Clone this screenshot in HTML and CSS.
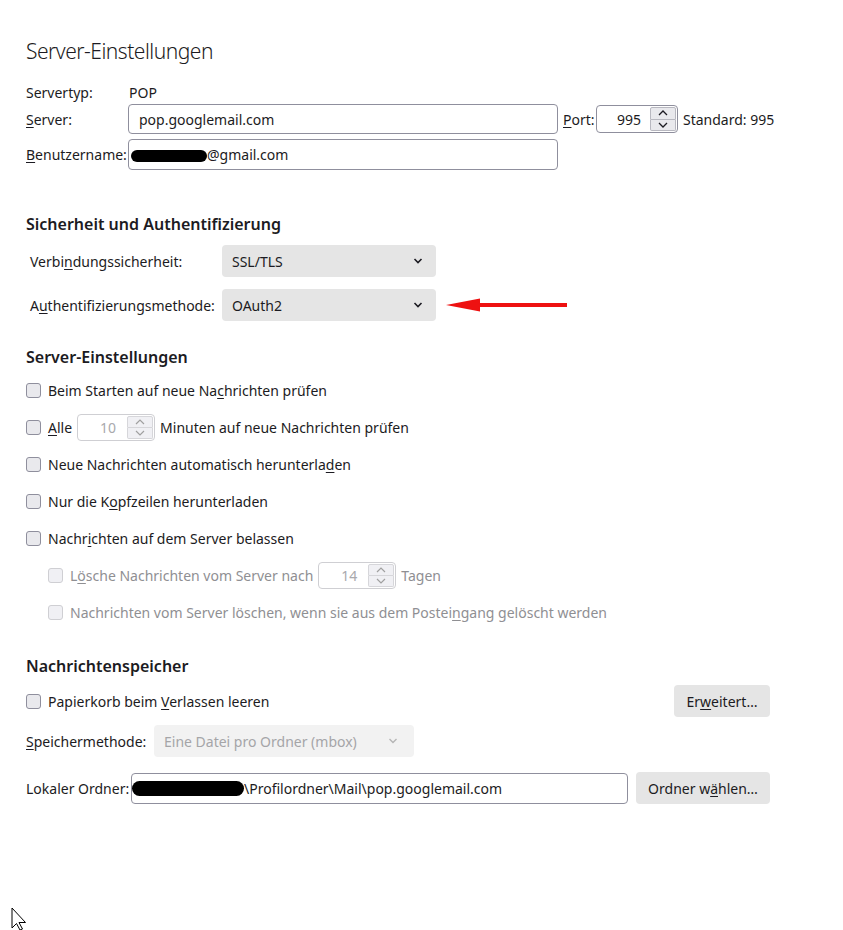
FILE: index.html
```html
<!DOCTYPE html>
<html lang="de">
<head>
<meta charset="utf-8">
<title>Server-Einstellungen</title>
<link rel="stylesheet" href="styles.css">
</head>
<body>
<div class="page">
  <h1 class="title">Server-Einstellungen</h1>

  <div class="row r-type">
    <span class="lbl-a">Servertyp:</span>
    <span class="value">POP</span>
  </div>
  <div class="row r-server">
    <span class="lbl-a"><u>S</u>erver:</span>
    <div class="textbox tb-server">pop.googlemail.com</div>
    <span class="port-lbl"><u>P</u>ort:</span>
    <div class="spin spin-port">
      <span class="spin-val">995</span>
      <span class="spin-btns"><span class="sb up"><svg viewBox="0 0 10 6" width="10" height="6"><path d="M1 5 L5 1 L9 5" fill="none" stroke="#1c1b22" stroke-width="1.3"/></svg></span><span class="sb dn"><svg viewBox="0 0 10 6" width="10" height="6"><path d="M1 1 L5 5 L9 1" fill="none" stroke="#1c1b22" stroke-width="1.3"/></svg></span></span>
    </div>
    <span class="std">Standard: 995</span>
  </div>
  <div class="row r-user">
    <span class="lbl-a"><u>B</u>enutzername:</span>
    <div class="textbox tb-user"><span class="redact r-user-blob"></span>@gmail.com</div>
  </div>

  <h2 class="sect s-sec">Sicherheit und Authentifizierung</h2>
  <div class="row sel-row r-conn">
    <span class="lbl-b">Verbi<u>n</u>dungssicherheit:</span>
    <div class="select sel-sec">SSL/TLS<svg class="chev" viewBox="0 0 10 6" width="10" height="6"><path d="M1.5 1 L5 4.5 L8.5 1" fill="none" stroke="#1c1b22" stroke-width="1.6"/></svg></div>
  </div>
  <div class="row sel-row r-auth">
    <span class="lbl-b">A<u>u</u>thentifizierungsmethode:</span>
    <div class="select sel-sec">OAuth2<svg class="chev" viewBox="0 0 10 6" width="10" height="6"><path d="M1.5 1 L5 4.5 L8.5 1" fill="none" stroke="#1c1b22" stroke-width="1.6"/></svg></div>
    <svg class="red-arrow" viewBox="0 0 122 16" width="122" height="16"><path d="M0 8 L34 1.5 L34 6 L121 6 L121 10 L34 10 L34 14.5 Z" fill="#ee1111"/></svg>
  </div>

  <h2 class="sect s-srv">Server-Einstellungen</h2>
  <div class="cb-row first"><span class="cb"></span><span>Beim Starten auf neue Na<u>c</u>hrichten prüfen</span></div>
  <div class="cb-row"><span class="cb"></span><span><u>A</u>lle</span>
    <div class="spin spin-small dis">
      <span class="spin-val">10</span>
      <span class="spin-btns"><span class="sb up"><svg viewBox="0 0 10 6" width="10" height="6"><path d="M1 5 L5 1 L9 5" fill="none" stroke="#a0a0a0" stroke-width="1.2"/></svg></span><span class="sb dn"><svg viewBox="0 0 10 6" width="10" height="6"><path d="M1 1 L5 5 L9 1" fill="none" stroke="#a0a0a0" stroke-width="1.2"/></svg></span></span>
    </div>
    <span>Minuten auf neue Nachrichten prüfen</span></div>
  <div class="cb-row"><span class="cb"></span><span>Neue Nachrichten automatisch herunterla<u>d</u>en</span></div>
  <div class="cb-row"><span class="cb"></span><span>Nur die K<u>o</u>pfzeilen herunterladen</span></div>
  <div class="cb-row"><span class="cb"></span><span>Nachr<u>i</u>chten auf dem Server belassen</span></div>
  <div class="cb-row sub dis"><span class="cb"></span><span>L<u>ö</u>sche Nachrichten vom Server nach</span>
    <div class="spin spin-small dis">
      <span class="spin-val">14</span>
      <span class="spin-btns"><span class="sb up"><svg viewBox="0 0 10 6" width="10" height="6"><path d="M1 5 L5 1 L9 5" fill="none" stroke="#a0a0a0" stroke-width="1.2"/></svg></span><span class="sb dn"><svg viewBox="0 0 10 6" width="10" height="6"><path d="M1 1 L5 5 L9 1" fill="none" stroke="#a0a0a0" stroke-width="1.2"/></svg></span></span>
    </div>
    <span>Tagen</span></div>
  <div class="cb-row sub dis"><span class="cb"></span><span>Nachrichten vom Server löschen, wenn sie aus dem Postei<u>n</u>gang gelöscht werden</span></div>

  <h2 class="sect s-store">Nachrichtenspeicher</h2>
  <div class="store-row r-trash">
    <div class="cb-inline"><span class="cb"></span><span>Papierkorb beim <u>V</u>erlassen leeren</span></div>
    <div class="btn btn-adv">Er<u>w</u>eitert…</div>
  </div>
  <div class="store-row r-method">
    <span class="lbl-c"><u>S</u>peichermethode:</span>
    <div class="select sel-dis">Eine Datei pro Ordner (mbox)<svg class="chev" viewBox="0 0 10 6" width="10" height="6"><path d="M1.5 1 L5 4.5 L8.5 1" fill="none" stroke="#b5b5b5" stroke-width="1.4"/></svg></div>
  </div>
  <div class="store-row r-local">
    <span class="lbl-d">Lokaler Ordner:</span>
    <div class="textbox tb-local"><span class="redact r-local-blob"></span>\Profilordner\Mail\pop.googlemail.com</div>
    <div class="btn btn-folder">Ordner w<u>ä</u>hlen…</div>
  </div>
</div>
<svg class="cursor" viewBox="0 0 18 24" width="18" height="24"><path d="M1 1 L1 21 L5.5 16.5 L9 23 L11.5 22 L8 15.5 L14.5 15.5 Z" fill="#ffffff" stroke="#000000" stroke-width="1"/></svg>
</body>
</html>
```

FILE: styles.css
```css
* { box-sizing: border-box; }
html, body { margin: 0; padding: 0; background: #ffffff; }
body {
  font-family: "Noto Sans", "Open Sans", sans-serif;
  font-size: 14px;
  color: #1c1b22;
  width: 843px;
  height: 930px;
  position: relative;
  overflow: hidden;
}
u { text-decoration: underline; text-underline-offset: 2px; }
.page { padding: 37px 0 0 26px; width: 770px; }

.title {
  font-size: 21px;
  font-weight: 300;
  line-height: 28px;
  letter-spacing: -0.5px;
  margin: 0;
  height: 28px;
}

.row { display: flex; align-items: center; }
.row > * { flex: none; }
.r-type { height: 20px; margin-top: 17px; }
.r-server { height: 30px; margin-top: 2px; }
.r-user { height: 31px; margin-top: 5px; }
.lbl-a { width: 102px; }
.value { padding-left: 1px; }

.textbox {
  border: 1px solid #8f8f9d;
  border-radius: 4px;
  height: 100%;
  display: flex;
  align-items: center;
  padding-left: 10px;
  background: #fff;
  flex: none;
  white-space: nowrap;
}
.tb-server { width: 430px; }
.tb-user { width: 430px; padding-left: 2px; }
.redact { display: inline-block; background: #000; border-radius: 8px; }
.r-user-blob { width: 76px; height: 12px; margin-top: 2px; }
.port-lbl { margin-left: 5px; width: 33px; }
.std { margin-left: 5px; white-space: nowrap; }

.spin {
  border: 1px solid #8f8f9d;
  border-radius: 4px;
  display: flex;
  align-items: stretch;
  background: #fff;
  flex: none;
}
.spin-port { width: 82px; height: 28px; }
.spin-val { flex: 1; text-align: right; padding-right: 9px; display: flex; align-items: center; justify-content: flex-end; }
.spin-btns { width: 27px; display: flex; flex-direction: column; padding: 1px 1px 1px 0; }
.sb { flex: 1; display: flex; align-items: center; justify-content: center; background: #e9e9ed; border: 1px solid #b8b8c0; }
.sb.up { border-radius: 2px 2px 0 0; }
.sb.dn { border-radius: 0 0 2px 2px; border-top: none; }

.sect { font-size: 16px; font-weight: 600; line-height: 22px; height: 22px; margin: 0; }
.s-sec { margin-top: 43px; }
.s-srv { margin-top: 25px; }
.s-store { margin-top: 29px; }

.sel-row { height: 32px; }
.r-conn { margin-top: 10px; }
.r-auth { margin-top: 12px; }
.lbl-b { width: 196px; padding-left: 4px; }
.select {
  background: #e5e5e5;
  border-radius: 4px;
  height: 32px;
  display: flex;
  align-items: center;
  justify-content: space-between;
  padding: 0 13px 0 10px;
  flex: none;
  white-space: nowrap;
}
.sel-sec { width: 214px; }
.chev { flex: none; }
.red-arrow { margin-left: 10px; }

.cb-row { display: flex; align-items: center; height: 28px; margin-top: 9px; gap: 7px; white-space: nowrap; }
.cb-row.first { margin-top: 8px; }
.cb-row .spin-small { margin: 0 -2px 0 -2px; }
.cb {
  width: 15px; height: 15px; flex: none;
  border: 1px solid #8f8f9d;
  border-radius: 3px;
  background: #e9e9ed;
}
.cb-row.sub { padding-left: 22px; }
.dis { color: #8f8f93; }
.cb-row.dis .cb { border-color: #cfcfd3; background: #f0f0f4; }
.spin-small { width: 78px; height: 27px; }
.spin-small.dis { border-color: #cfcfd3; color: #a9a9ad; }
.spin-small .spin-val { padding-right: 11px; }
.spin-small .sb { background: #f0f0f4; border-color: #d6d6da; }

.store-row { display: flex; align-items: center; height: 32px; white-space: nowrap; }
.store-row > * { flex: none; }
.r-trash { margin-top: 8px; justify-content: space-between; }
.r-method { margin-top: 8px; }
.r-local { margin-top: 15px; }
.cb-inline { display: flex; align-items: center; gap: 7px; }
.btn {
  background: #e5e5e5;
  border-radius: 4px;
  height: 32px;
  display: flex;
  align-items: center;
  justify-content: center;
}
.btn-adv { width: 96px; }
.lbl-c { width: 128px; }
.sel-dis { width: 260px; background: #f2f2f2; color: #a5a5a8; padding-left: 10px; padding-right: 16px; }
.lbl-d { width: 105px; }
.tb-local { width: 497px; height: 31px; padding-left: 0; }
.r-local-blob { width: 112px; height: 15px; }
.btn-folder { width: 134px; margin-left: 8px; }

.cursor { position: absolute; left: 11px; top: 907px; }
```
